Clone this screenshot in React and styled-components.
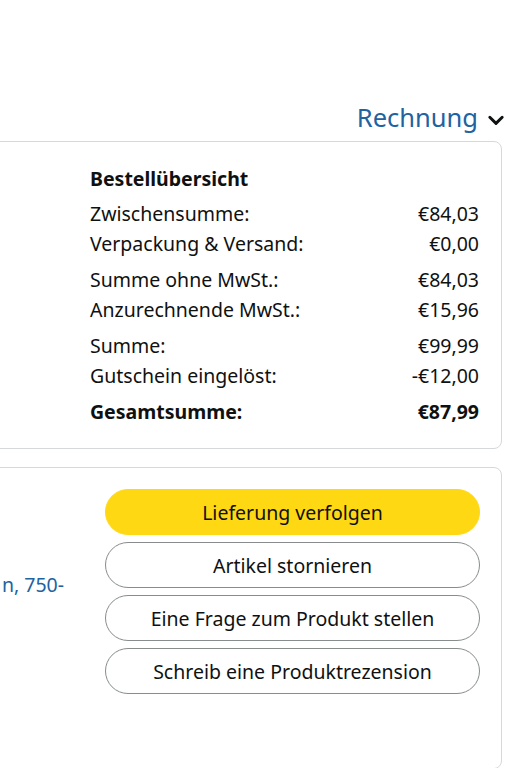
import React from "react";
import styled, { createGlobalStyle } from "styled-components";

const GlobalStyle = createGlobalStyle`
  body {
    margin: 0;
    background: #ffffff;
    font-family: "Noto Sans", "Liberation Sans", Arial, sans-serif;
    color: #0f1111;
  }
`;

const summaryRows = [
  [
    ["Zwischensumme:", "€84,03"],
    ["Verpackung & Versand:", "€0,00"],
  ],
  [
    ["Summe ohne MwSt.:", "€84,03"],
    ["Anzurechnende MwSt.:", "€15,96"],
  ],
  [
    ["Summe:", "€99,99"],
    ["Gutschein eingelöst:", "-€12,00"],
  ],
];

const actions = [
  { label: "Lieferung verfolgen", primary: true },
  { label: "Artikel stornieren" },
  { label: "Eine Frage zum Produkt stellen" },
  { label: "Schreib eine Produktrezension" },
];

const App = () => {
  return (
    <Page>
      <GlobalStyle />
      <Toolbar>
        <InvoiceLink href="#">
          Rechnung
          <Chevron viewBox="0 0 16 16">
            <path d="M2.5 5.5 L8 11 L13.5 5.5" />
          </Chevron>
        </InvoiceLink>
      </Toolbar>

      <Card>
        <Spacer />
        <Summary>
          <SummaryTitle>Bestellübersicht</SummaryTitle>
          {summaryRows.map((group, i) => (
            <Group key={i}>
              {group.map(([label, value]) => (
                <Row key={label}>
                  <span>{label}</span>
                  <span>{value}</span>
                </Row>
              ))}
            </Group>
          ))}
          <Row $bold>
            <span>Gesamtsumme:</span>
            <span>€87,99</span>
          </Row>
        </Summary>
      </Card>

      <Card $tall>
        <ProductInfo>
          <ProductTitle href="#">n, 750-</ProductTitle>
        </ProductInfo>
        <Actions>
          {actions.map((a) => (
            <ActionButton key={a.label} $primary={a.primary}>
              {a.label}
            </ActionButton>
          ))}
        </Actions>
      </Card>
    </Page>
  );
};

const Page = styled.div`
  width: 528px;
  height: 768px;
  overflow: hidden;
  padding-top: 98px;
  box-sizing: border-box;
`;

const Toolbar = styled.div`
  display: flex;
  justify-content: flex-end;
  padding-right: 23px;
  height: 43px;
`;

const InvoiceLink = styled.a`
  display: flex;
  align-items: center;
  gap: 9px;
  height: 38px;
  font-size: 25.5px;
  color: #2162a1;
  text-decoration: none;
`;

const Chevron = styled.svg`
  width: 18px;
  height: 18px;
  margin-top: 5px;
  fill: none;
  stroke: #0f1111;
  stroke-width: 2.6;
  stroke-linecap: round;
  stroke-linejoin: round;
`;

const Card = styled.div`
  display: flex;
  margin-left: -40px;
  margin-right: 26px;
  margin-bottom: 18px;
  border: 1px solid #d5d9d9;
  border-radius: 8px;
  padding: ${(p) => (p.$tall ? "21px 21px 74px 0" : "22px 22px 21px 0")};
`;

const Spacer = styled.div`
  width: 129px;
  flex-shrink: 0;
`;

const Summary = styled.div`
  flex: 1;
  display: flex;
  flex-direction: column;
  font-size: 19.5px;
  line-height: 30px;
`;

const SummaryTitle = styled.div`
  font-weight: 700;
  margin-bottom: 5px;
`;

const Group = styled.div`
  margin-bottom: 6px;
`;

const Row = styled.div`
  display: flex;
  justify-content: space-between;
  font-weight: ${(p) => (p.$bold ? 700 : 400)};
`;

const ProductInfo = styled.div`
  width: 144px;
  box-sizing: border-box;
  flex-shrink: 0;
  display: flex;
  justify-content: flex-end;
  padding-top: 84px;
  padding-right: 41px;
  overflow: hidden;
`;

const ProductTitle = styled.a`
  white-space: nowrap;
  font-size: 19.5px;
  line-height: 24px;
  height: 24px;
  color: #2162a1;
  text-decoration: none;
`;

const Actions = styled.div`
  flex: 1;
  display: flex;
  flex-direction: column;
  gap: 7px;
`;

const ActionButton = styled.button`
  height: 46px;
  border-radius: 23px;
  border: 1px solid ${(p) => (p.$primary ? "#ffd814" : "#888c8c")};
  background: ${(p) => (p.$primary ? "#ffd814" : "#ffffff")};
  font-family: "Noto Sans", "Liberation Sans", Arial, sans-serif;
  font-size: 19.5px;
  color: #0f1111;
  cursor: pointer;
`;

export default App;
